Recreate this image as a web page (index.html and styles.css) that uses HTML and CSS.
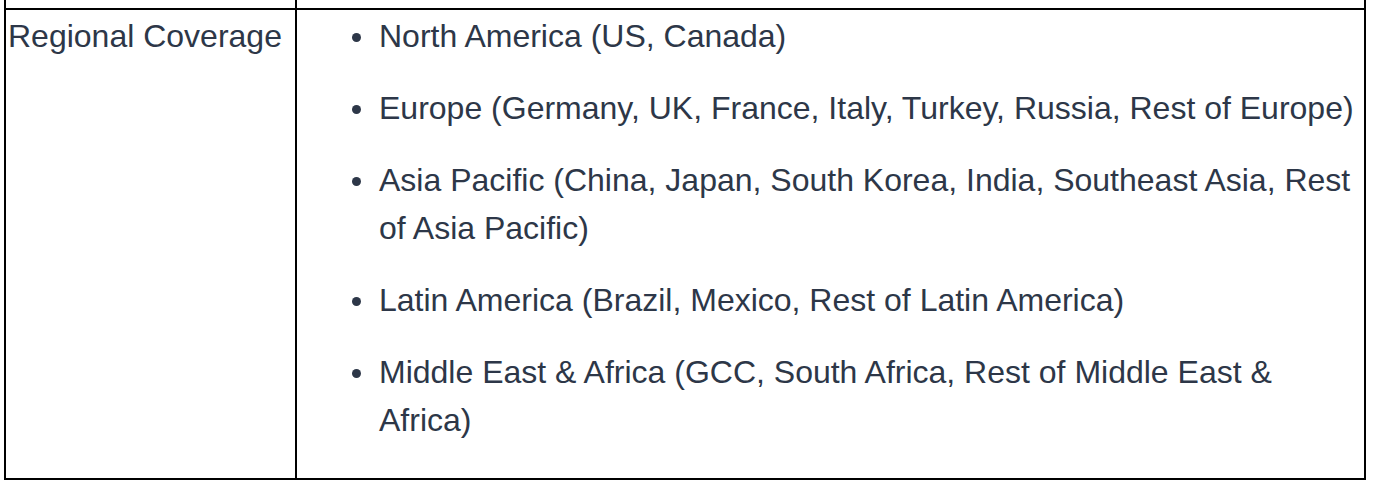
FILE: index.html
```html
<!DOCTYPE html>
<html>
<head>
<meta charset="utf-8">
<link rel="stylesheet" href="styles.css">
</head>
<body>
<table class="spec-table">
  <tr class="prev-row">
    <td class="label-cell"></td>
    <td class="value-cell"></td>
  </tr>
  <tr>
    <td class="label-cell">Regional Coverage</td>
    <td class="value-cell">
      <ul class="region-list">
        <li>North America (US, Canada)</li>
        <li>Europe (Germany, UK, France, Italy, Turkey, Russia, Rest of Europe)</li>
        <li>Asia Pacific (China, Japan, South Korea, India, Southeast Asia, Rest of Asia Pacific)</li>
        <li>Latin America (Brazil, Mexico, Rest of Latin America)</li>
        <li>Middle East &amp; Africa (GCC, South Africa, Rest of Middle East &amp; Africa)</li>
      </ul>
    </td>
  </tr>
</table>
</body>
</html>
```

FILE: styles.css
```css
html, body {
  margin: 0;
  padding: 0;
  background: #ffffff;
}

body {
  font-family: "Liberation Sans", Arial, Helvetica, sans-serif;
  font-size: 32px;
  line-height: 48px;
  color: #2d3748;
  padding-left: 4px;
}

.spec-table {
  border-collapse: collapse;
  width: 1362px;
}

.spec-table td {
  border: 2px solid #000000;
  padding: 2px;
  vertical-align: top;
}

.prev-row td {
  border-top: 0;
  height: 8px;
  padding: 0;
}

.label-cell {
  width: 285px;
}

.region-list {
  margin: 0 0 32px 0;
  padding-left: 80px;
  list-style: none;
}

.region-list li {
  position: relative;
}

.region-list li::before {
  content: "";
  position: absolute;
  left: -27px;
  top: 21px;
  width: 9px;
  height: 9px;
  border-radius: 50%;
  background: #2d3748;
}

.region-list li + li {
  margin-top: 24px;
}
```
